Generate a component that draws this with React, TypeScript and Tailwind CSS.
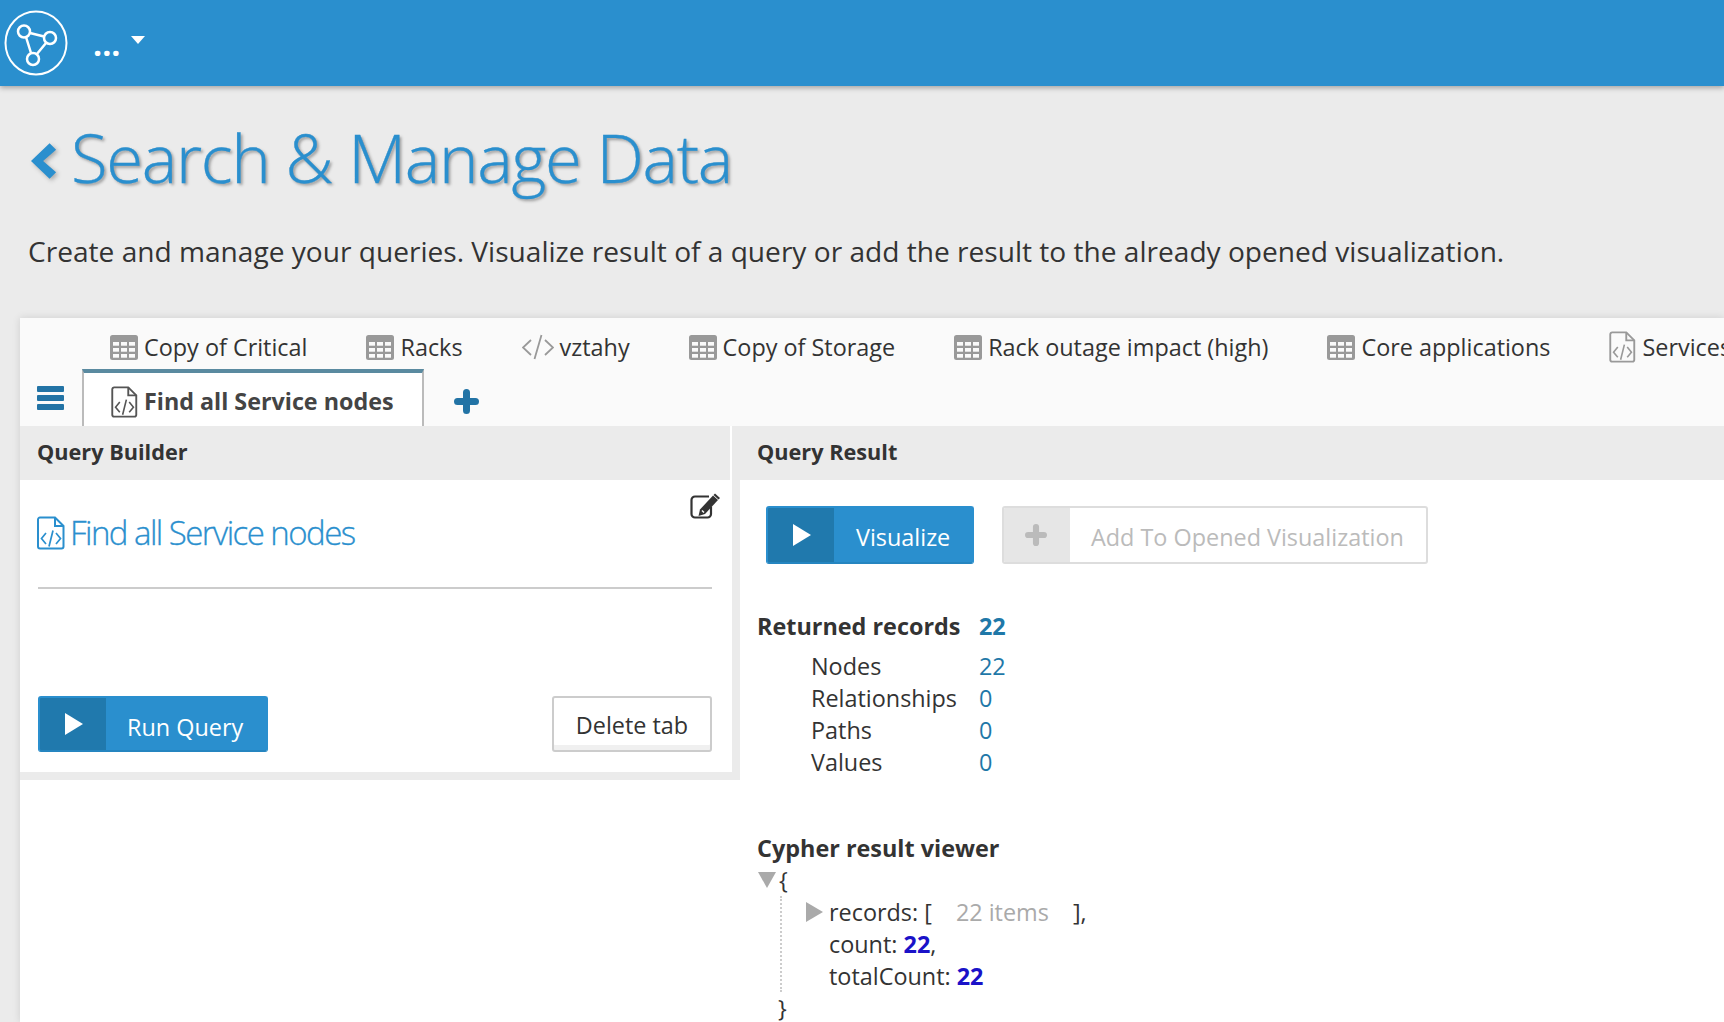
function FileCodeIcon({ className }: { className: string }) {
  return (
    <svg viewBox="0 0 28 34" fill="none" stroke="currentColor" strokeWidth="2" className={className}>
      <path d="M3 1.500h15l8.500 8.500v20.500a2 2 0 0 1-2 2H3a2 2 0 0 1-2-2v-27a2 2 0 0 1 2-2z" />
      <path d="M18 1.500v8.500h8.500" />
      <path d="M9 17l-4.500 5.500L9 28M19 17l4.500 5.500L19 28M16 14.500l-4 16" strokeWidth="1.700" />
    </svg>
  );
}

function TableIcon() {
  const cols = [3, 11, 19];
  const rows = [7, 13, 19];
  return (
    <svg viewBox="0 0 28 25" className="h-[25px] w-[28px] shrink-0">
      <rect width="28" height="25" rx="2.500" fill="#999" />
      {rows.map((y) =>
        cols.map((x) => <rect key={`${x}-${y}`} x={x} y={y} width="6" height="3.700" fill="#fafafa" />),
      )}
    </svg>
  );
}

function CodeIcon() {
  return (
    <svg viewBox="0 0 32 26" fill="none" stroke="#999" strokeWidth="1.800" className="h-[26px] w-[32px] shrink-0">
      <path d="M9 6l-8 7.500 8 7.500M23 6l8 7.500-8 7.500M19.500 1l-7 24" />
    </svg>
  );
}

function EditIcon() {
  return (
    <svg viewBox="0 0 31 26" className="mt-[13px] h-[26px] w-[31px]">
      <path d="M21 13.500v7.500a3.500 3.500 0 0 1-3.500 3.500H5A3.500 3.500 0 0 1 1.500 21V7A3.500 3.500 0 0 1 5 3.500h14" fill="none" stroke="#333" strokeWidth="2.200" />
      <path d="M23 2.500l5 4.500-13 14-6.500 2 1.500-6.500z" fill="#333" />
      <path d="M25 0.500l5 4.500-1.500 1.500-5-4.500z" fill="#333" />
      <path d="M12 17.500l2 2" stroke="white" strokeWidth="1.500" />
    </svg>
  );
}

function PlusIcon({ className }: { className: string }) {
  return (
    <svg viewBox="0 0 25 25" fill="none" stroke="currentColor" strokeWidth="7" strokeLinecap="round" className={className}>
      <path d="M12.500 3.500v18M3.500 12.500h18" />
    </svg>
  );
}

function LogoIcon() {
  return (
    <svg viewBox="0 0 64 66" fill="none" stroke="white" strokeWidth="2" className="h-[66px] w-[64px]">
      <ellipse cx="32" cy="33" rx="30.500" ry="31.500" />
      <g strokeWidth="2.500">
        <circle cx="20" cy="21.500" r="6" />
        <circle cx="46" cy="28" r="6" />
        <circle cx="29" cy="49" r="6" />
        <path d="M26 23l14 3.500M22 27l5 16M42 33l-9.500 11.500" />
      </g>
    </svg>
  );
}

function PlayIcon() {
  return (
    <svg viewBox="0 0 18 22" fill="white" className="h-[22px] w-[18px]">
      <path d="M0 0l18 11L0 22z" />
    </svg>
  );
}

const tabs = [
  { label: 'Copy of Critical', icon: 'table' },
  { label: 'Racks', icon: 'table' },
  { label: 'vztahy', icon: 'code' },
  { label: 'Copy of Storage', icon: 'table' },
  { label: 'Rack outage impact (high)', icon: 'table' },
  { label: 'Core applications', icon: 'table' },
  { label: 'Services', icon: 'file' },
];

const counts = [
  { label: 'Nodes', value: 22 },
  { label: 'Relationships', value: 0 },
  { label: 'Paths', value: 0 },
  { label: 'Values', value: 0 },
];

export default function App() {
  return (
    <div className="flex h-[1022px] w-[1724px] flex-col overflow-hidden bg-[#ebebeb] font-['Open_Sans',sans-serif] text-[23.4px] text-[#333]">
      <header className="flex h-[86px] shrink-0 items-center bg-[#2a8fce] pl-[4px] text-white shadow-[0_2px_5px_rgba(0,0,0,0.3)]">
        <LogoIcon />
        <span className="ml-[25px] mt-[1px] text-[32px] leading-none font-bold">...</span>
        <span className="mb-[6px] ml-[11px] h-0 w-0 border-x-[7px] border-t-[8px] border-x-transparent border-t-white" />
      </header>

      <div className="flex h-[232px] shrink-0 flex-col pl-[28px]">
        <div className="mt-[31px] flex items-center">
          <svg viewBox="0 0 28 38" fill="#2a8fce" className="ml-[3px] mt-[8px] h-[40px] w-[26px] [filter:drop-shadow(2px_2px_2px_#aaa)]">
            <path d="M20 0l7 7L13 19l14 12-7 7L0 19z" />
          </svg>
          <h1 className="ml-[14px] text-[67px] leading-[80px] font-light tracking-[-1.3px] text-[#2a8fce] [-webkit-text-stroke:0.3px_#2a8fce] [text-shadow:2px_2px_3px_#999]">
            Search &amp; Manage Data
          </h1>
        </div>
        <p className="mt-[34px] text-[28.1px] leading-[40px] text-[#333]">
          Create and manage your queries. Visualize result of a query or add the result to the already opened visualization.
        </p>
      </div>

      <main className="ml-[20px] flex flex-1 flex-col bg-white shadow-[0_0_8px_rgba(0,0,0,0.12)]">
        <div className="h-[108px] shrink-0 bg-[#fafafa]">
          <div className="flex h-[51px] items-center gap-[59px] pl-[90px] pt-[8px] whitespace-nowrap">
            {tabs.map((tab) => (
              <div key={tab.label} className="flex shrink-0 items-center gap-[6px]">
                {tab.icon === 'table' && <TableIcon />}
                {tab.icon === 'code' && <CodeIcon />}
                {tab.icon === 'file' && <FileCodeIcon className="h-[32px] w-[27px] text-[#999]" />}
                <span>{tab.label}</span>
              </div>
            ))}
          </div>
          <div className="flex h-[57px] items-end">
            <div className="flex h-[57px] w-[62px] flex-col justify-center gap-[3px] pl-[17px] pt-[1px]">
              <span className="h-[6px] w-[27px] rounded-[1px] bg-[#2273a5]" />
              <span className="h-[6px] w-[27px] rounded-[1px] bg-[#2273a5]" />
              <span className="h-[6px] w-[27px] rounded-[1px] bg-[#2273a5]" />
            </div>
            <div className="flex h-[57px] w-[342px] items-center gap-[6px] border-x-2 border-t-[4px] border-x-[#bbb] border-t-[#5a8aa0] bg-white pl-[27px] pt-[4px] text-[23.3px] font-bold text-[#444]">
              <FileCodeIcon className="h-[32px] w-[27px] shrink-0 text-[#555]" />
              <span>Find all Service nodes</span>
            </div>
            <div className="flex h-[57px] items-center pl-[30px] pt-[7px] text-[#2273a5]">
              <PlusIcon className="h-[25px] w-[25px]" />
            </div>
          </div>
        </div>

        <div className="flex h-[54px] shrink-0 items-center font-bold text-[21.7px]">
          <div className="flex h-full w-[710px] items-center bg-[#ebebeb] pb-[2px] pl-[17px]">Query Builder</div>
          <div className="ml-[2px] flex h-full flex-1 items-center bg-[#ebebeb] pb-[2px] pl-[25px]">Query Result</div>
        </div>

        <div className="flex flex-1">
          <div className="w-[720px] shrink-0 self-start bg-[#ebebeb] pr-[8px] pb-[8px]">
            <div className="h-[292px] bg-white">
              <div className="flex h-[107px] items-start justify-between pl-[17px] pr-[11px]">
                <div className="mt-[33px] flex items-center gap-[5px] text-[#2a8fce]">
                  <FileCodeIcon className="h-[34px] w-[28px] shrink-0" />
                  <span className="text-[33px] leading-[40px] font-light tracking-[-1.55px] [-webkit-text-stroke:0.3px_#2a8fce]">Find all Service nodes</span>
                </div>
                <EditIcon />
              </div>
              <div className="ml-[18px] mr-[20px] h-[2px] bg-[#ccc]" />
              <div className="mt-[107px] flex items-start justify-between pl-[18px] pr-[20px]">
                <button className="flex h-[56px] w-[230px] overflow-hidden rounded-[3px] border-2 border-[#2a8fce] border-b-[#2585c0] bg-[#2a8fce] text-white">
                  <span className="flex h-full w-[66px] items-center justify-center bg-[#2079ad] pl-[2px]">
                    <PlayIcon />
                  </span>
                  <span className="flex h-full flex-1 items-center pl-[21px] pt-[8px]">Run Query</span>
                </button>
                <button className="h-[56px] w-[160px] rounded-[3px] border-2 border-[#ccc] bg-white pt-[4px] text-[#333] shadow-[inset_0_-5px_0_#f0f0f0]">
                  Delete tab
                </button>
              </div>
            </div>
          </div>

          <div className="flex-1 pl-[26px]">
            <div className="mt-[26px] flex items-start">
              <button className="flex h-[58px] w-[208px] overflow-hidden rounded-[3px] border-2 border-[#2a8fce] border-b-[#2585c0] bg-[#2a8fce] text-white">
                <span className="flex h-full w-[66px] items-center justify-center bg-[#2079ad] pl-[2px]">
                  <PlayIcon />
                </span>
                <span className="flex h-full flex-1 items-center pl-[22px] pt-[5px]">Visualize</span>
              </button>
              <button className="ml-[28px] flex h-[58px] w-[426px] overflow-hidden rounded-[3px] border-2 border-[#ddd] bg-white text-[#bbb]">
                <span className="flex h-full w-[66px] items-center justify-center bg-[#e6e6e6] pr-[2px] text-[#bbb]">
                  <PlusIcon className="h-[22px] w-[22px]" />
                </span>
                <span className="flex h-full flex-1 items-center pl-[21px] pt-[5px]">Add To Opened Visualization</span>
              </button>
            </div>

            <div className="-ml-[9px] mt-[43px] flex h-[40px] items-center font-bold">
              <span className="w-[222px]">Returned records</span>
              <span className="text-[#1f78a8]">22</span>
            </div>
            <div className="mt-[4px]">
              {counts.map((row) => (
                <div key={row.label} className="flex h-[32px] items-center pl-[45px]">
                  <span className="w-[168px]">{row.label}</span>
                  <span className="text-[#1f78a8]">{row.value}</span>
                </div>
              ))}
            </div>

            <div className="-ml-[9px] mt-[51px] h-[34px] font-bold leading-[36px]">Cypher result viewer</div>
            <div className="-ml-[9px] leading-[32px]">
              <div className="flex h-[32px] items-center">
                <span className="ml-[1px] h-0 w-0 border-x-[9px] border-t-[16px] border-x-transparent border-t-[#aaa]" />
                <span className="ml-[3px]">{'{'}</span>
              </div>
              <div className="ml-[23px] border-l-2 border-dotted border-[#ccc] pl-[24px]">
                <div className="relative flex h-[32px] items-center pl-[23px]">
                  <span className="absolute left-0 h-0 w-0 border-y-[10px] border-l-[17px] border-y-transparent border-l-[#aaa]" />
                  <span>records: [</span>
                  <span className="ml-[24px] text-[#aaa]">22 items</span>
                  <span className="ml-[24px]">],</span>
                </div>
                <div className="h-[32px] pl-[23px]">
                  count: <span className="font-bold text-[#1a12c8]">22</span>,
                </div>
                <div className="h-[32px] pl-[23px]">
                  totalCount: <span className="font-bold text-[#1a12c8]">22</span>
                </div>
              </div>
              <div className="ml-[21px] mt-[3px] h-[26px] leading-[26px]">{'}'}</div>
            </div>
          </div>
        </div>
      </main>
    </div>
  );
}
